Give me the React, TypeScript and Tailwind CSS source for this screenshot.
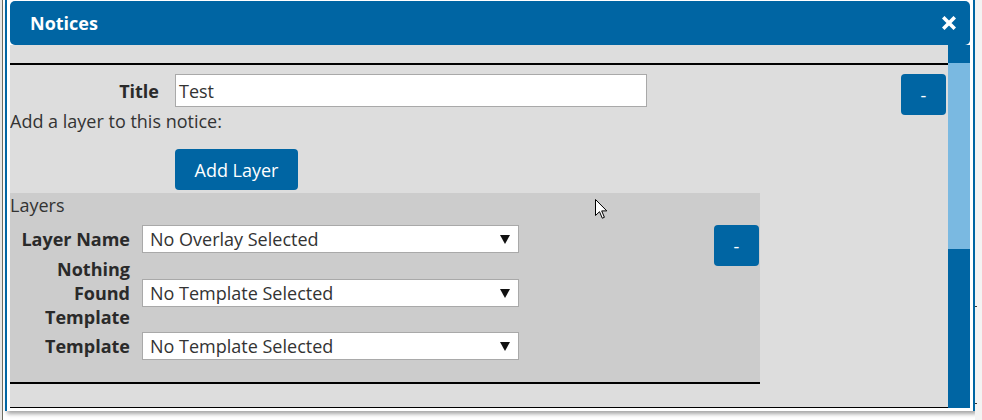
import React from "react";

const BLUE = "bg-[#0065a3]";

function SelectBox({ text }: { text: string }) {
  return (
    <div className="flex h-[28px] w-[377px] items-center justify-between border border-[#a9a9a9] bg-white pl-[7px] pr-[8px] text-[18px] leading-[24px] text-[#333]">
      <span>{text}</span>
      <svg width="10" height="9" viewBox="0 0 10 9">
        <polygon points="0,0 10,0 5,9" fill="#111" />
      </svg>
    </div>
  );
}

function MinusButton() {
  return (
    <div className={`flex h-[41px] w-[45px] items-center justify-center rounded-[4px] ${BLUE} text-[18px] leading-[24px] text-white`}>
      -
    </div>
  );
}

export default function App() {
  return (
    <div
      className="relative flex h-[420px] w-[982px] overflow-hidden bg-white"
      style={{ fontFamily: '"Open Sans", "Noto Sans", sans-serif' }}
    >
      {/* left background strip */}
      <div className="flex h-full w-[5px]">
        <div className="h-full w-[2px] bg-[#e6e6e6]" />
        <div className="h-full w-[1px] bg-[#6e6e62]" />
        <div className="h-full w-[2px] bg-white" />
      </div>

      {/* dialog */}
      <div className="flex h-[411px] w-[970px] flex-col border-x-2 border-[#0065a3] bg-white px-[3px] pt-[1px] shadow-[2px_3px_4px_rgba(0,0,0,0.35)]">
        {/* header */}
        <div className={`flex h-[44px] items-center justify-between rounded-[5px] ${BLUE} pl-[20px] pr-[14px]`}>
          <span className="text-[18px] font-bold leading-[24px] text-white">Notices</span>
          <svg width="14" height="14" viewBox="0 0 14 14">
            <path d="M2.5 2.5 L11.5 11.5 M11.5 2.5 L2.5 11.5" stroke="#fff" strokeWidth="3.6" strokeLinecap="square" />
          </svg>
        </div>

        {/* body */}
        <div className="flex h-[363px]">
          <div className="h-[363px] w-[938px] overflow-hidden bg-[#dddddd] pt-[18px] text-[18px] leading-[24px] text-[#333]">
            {/* notice */}
            <div className="flex border-t-2 border-black">
              <div className="flex flex-1 flex-col">
                <div className="mt-[9px] flex h-[33px] items-center">
                  <div className="w-[149px] text-right font-bold text-[#2a2a2a]">Title</div>
                  <div className="ml-[16px] flex h-[33px] w-[472px] items-center border border-[#a9a9a9] bg-white pl-[3px]">
                    Test
                  </div>
                </div>
                <div className="mt-[2px]">Add a layer to this notice:</div>
                <div className="ml-[165px] mt-[16px]">
                  <div className={`flex h-[41px] w-[123px] items-center justify-center rounded-[4px] ${BLUE} text-white`}>
                    Add Layer
                  </div>
                </div>

                {/* layers panel */}
                <div className="mt-[3px] w-[750px] border-b-2 border-black bg-[#cccccc] pb-[20px]">
                  <div>Layers</div>
                  <div className="mt-[6px] flex">
                    <div className="flex flex-1 flex-col">
                      <div className="flex items-center py-[2px]">
                        <div className="w-[120px] text-right font-bold text-[#2a2a2a]">Layer Name</div>
                        <div className="ml-[12px]">
                          <SelectBox text="No Overlay Selected" />
                        </div>
                      </div>
                      <div className="flex items-center pb-[1px] pt-[2px]">
                        <div className="w-[120px] text-right font-bold text-[#2a2a2a]">Nothing Found Template</div>
                        <div className="ml-[12px]">
                          <SelectBox text="No Template Selected" />
                        </div>
                      </div>
                      <div className="flex items-center py-[2px]">
                        <div className="w-[120px] text-right font-bold text-[#2a2a2a]">Template</div>
                        <div className="ml-[12px]">
                          <SelectBox text="No Template Selected" />
                        </div>
                      </div>
                    </div>
                    <div className="mr-[1px] mt-[2px]">
                      <MinusButton />
                    </div>
                  </div>
                </div>
              </div>
              <div className="mr-[2px] mt-[9px]">
                <MinusButton />
              </div>
            </div>
            {/* next notice (cut off) */}
            <div className="mt-[23px] border-t-2 border-black" />
          </div>

          {/* scrollbar */}
          <div className="flex w-[22px] flex-col bg-[#0065a3]">
            <div className="h-[18px]" />
            <div className="h-[186px] bg-[#7ab9e1]" />
          </div>
        </div>
      </div>

      {/* right background strip */}
      <div className="flex w-[7px] flex-col bg-[#f3f3f3]">
        <div className="h-[306px]" />
        <div className="h-[1px] w-[2px] bg-[#333]" />
        <div className="h-[96px]" />
        <div className="h-[1px] w-[2px] bg-[#333]" />
      </div>

      {/* mouse cursor */}
      <svg className="absolute left-[595px] top-[199px]" width="13" height="21" viewBox="0 0 13 21">
        <path d="M0.5 0.5 L0.5 16.5 L4.5 12.7 L7.3 19.2 L9.4 18.3 L6.7 11.9 L11.8 11.9 Z" fill="#fff" stroke="#000" strokeWidth="1" strokeLinejoin="round" />
      </svg>
    </div>
  );
}
